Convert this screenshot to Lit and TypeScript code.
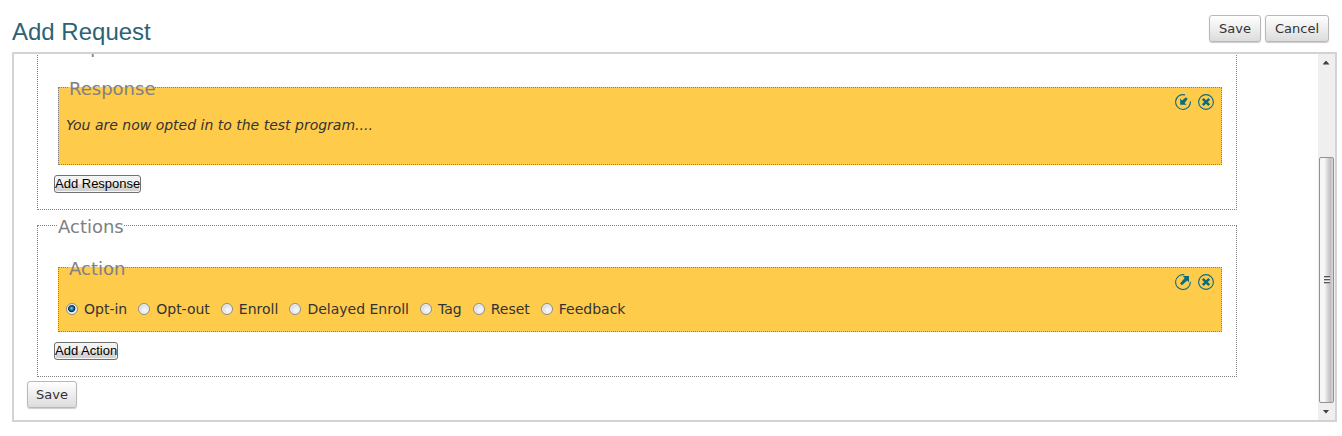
import { LitElement, html, css, svg } from "lit";
import { customElement, property, state } from "lit/decorators.js";

@customElement("round-icon")
class RoundIcon extends LitElement {
  @property() name: "collapse" | "expand" | "remove" = "remove";

  static styles = css`
    :host {
      display: block;
      width: 16px;
      height: 16px;
      color: #0b6b7d;
    }
    .glyph {
      display: block;
      width: 16px;
      height: 16px;
    }
  `;

  private shape() {
    if (this.name === "remove") {
      return svg`
        <circle cx="8" cy="8" r="7.4" fill="none" stroke="currentColor" stroke-width="1.1"/>
        <path d="M4.8 4.8L11.2 11.2M11.2 4.8L4.8 11.2" stroke="currentColor" stroke-width="2.5" fill="none"/>`;
    }
    if (this.name === "collapse") {
      return svg`
        <path d="M10 0.9A7.4 7.4 0 1 0 15.4 7.4" fill="none" stroke="currentColor" stroke-width="1.1"/>
        <path d="M5.2 4.4V10.8H11.6L9.6 8.9L12.7 5L10.9 3.2L7.1 6.4Z" fill="currentColor"/>`;
    }
    return svg`
      <path d="M9.4 0.8A7.4 7.4 0 1 0 15.4 7.8" fill="none" stroke="currentColor" stroke-width="1.1"/>
      <path d="M7.8 2H14V8.2L12.2 6.4L6.9 11.2L5.1 9.4L9.7 3.9Z" fill="currentColor"/>`;
  }

  render() {
    return html`<svg class="glyph" viewBox="0 0 16 16" aria-hidden="true">${this.shape()}</svg>`;
  }
}

@customElement("app-root")
class AppRoot extends LitElement {
  @state() private selected = "Opt-in";

  private actions = ["Opt-in", "Opt-out", "Enroll", "Delayed Enroll", "Tag", "Reset", "Feedback"];

  static styles = css`
    :host {
      display: flex;
      flex-direction: column;
      box-sizing: border-box;
      height: 100vh;
      padding: 12px 5px 14px 12px;
      background: #fff;
      color: #333;
      font: 14px/20px Verdana, "DejaVu Sans", sans-serif;
    }
    * {
      box-sizing: border-box;
    }
    .top {
      display: flex;
      align-items: center;
      justify-content: space-between;
      height: 40px;
      padding-right: 8px;
    }
    .title {
      margin: 0;
      color: #2b6376;
      font: 24px/40px "Liberation Sans", Arial, sans-serif;
    }
    .buttons {
      display: flex;
      gap: 4px;
      padding-bottom: 7px;
    }
    .btn {
      height: 27px;
      padding: 0 8px;
      border: 1px solid #b8b8b8;
      border-radius: 3px;
      background: linear-gradient(#fff, #dcdcdc);
      box-shadow: 0 1px 1px #ccc;
      color: #333;
      font: 13px/20px Verdana, "DejaVu Sans", sans-serif;
    }
    .top .btn {
      padding: 0 9px;
    }
    .panel {
      display: flex;
      flex: 1;
      min-height: 0;
      border: 2px solid #d3d3d3;
    }
    .scroller {
      flex: 1;
      overflow-y: auto;
      scrollbar-width: none;
      padding: 80px 0 12px 13px;
    }
    .group {
      min-width: 0;
      margin: 0 81px 8px 10px;
      padding: 28px 14px 16px 16px;
      border: 1px dotted #808080;
    }
    .group:last-of-type {
      margin-bottom: 4px;
    }
    legend {
      padding: 4px 0 0;
      color: #808080;
      font-size: 18px;
      line-height: 10px;
    }
    .group > .legend {
      margin-left: 4px;
    }
    .card {
      min-width: 0;
      margin: 0 0 10px 4px;
      padding: 0 7px;
      border: 1px dotted #808080;
      background: #ffcb4b;
    }
    .card > .legend {
      margin-left: 3px;
    }
    .row {
      display: flex;
      justify-content: space-between;
    }
    .message {
      margin: 0;
      padding: 21px 0 29px;
      font-style: italic;
    }
    .tools {
      display: flex;
      gap: 7px;
    }
    .tool {
      width: 16px;
      height: 16px;
      padding: 0;
      border: 0;
      background: none;
    }
    .options {
      display: flex;
      flex-wrap: wrap;
      gap: 11px;
      padding: 25px 0 12px;
    }
    .option {
      display: flex;
      align-items: center;
      gap: 6px;
    }
    .radio {
      appearance: none;
      width: 12px;
      height: 12px;
      margin: 0;
      border: 1px solid #8e8f8f;
      border-radius: 50%;
      background: radial-gradient(circle at 60% 60%, #f4f4f4 20%, #bfc4c8 100%);
      box-shadow: inset 0 0 0 1px #f4f4f4;
    }
    .radio:checked {
      background: radial-gradient(circle at 46% 44%, #7fd8f5 0, #1a6f9e 24%, #0b2c4a 42%, #e8e8e8 54%);
    }
    .add {
      display: block;
      height: 18px;
      padding: 0;
      border: 1px solid #707070;
      border-radius: 3px;
      background: linear-gradient(#f2f2f2 0 50%, #dddddd 50%, #cfcfcf);
      box-shadow: inset 0 0 0 1px #f6f6f6;
      color: #000;
      font: 13px/16px "Liberation Sans", Arial, sans-serif;
    }
    .bar {
      display: grid;
      grid-template-rows: 17px 1fr 17px;
      width: 17px;
      padding-right: 1px;
      background: #efefef;
    }
    .arrow {
      place-self: center;
      width: 7px;
      height: 4px;
      background: #404040;
    }
    .up {
      clip-path: polygon(50% 0, 100% 100%, 0 100%);
    }
    .down {
      clip-path: polygon(0 0, 100% 0, 50% 100%);
    }
    .thumb {
      display: grid;
      place-items: center;
      align-self: end;
      height: 74%;
      margin-left: 1px;
      border: 1px solid #939393;
      border-radius: 2px;
      background: linear-gradient(90deg, #f6f6f6 0 35%, #dadadc 55%, #c0c0c4 80%, #d8d8d8);
    }
    .grip {
      width: 6px;
      height: 8px;
      background: repeating-linear-gradient(#555 0 1px, #bbb 1px 2px, #f4f4f4 2px 3px);
    }
  `;

  firstUpdated() {
    const scroller = this.renderRoot.querySelector(".scroller")!;
    scroller.scrollTop = scroller.scrollHeight;
  }

  private tools(toggle: "collapse" | "expand", subject: string) {
    return html`
      <div class="tools">
        <button class="tool" type="button" aria-label="${toggle} ${subject}"><round-icon name=${toggle}></round-icon></button>
        <button class="tool" type="button" aria-label="remove ${subject}"><round-icon name="remove"></round-icon></button>
      </div>`;
  }

  render() {
    return html`
      <header class="top">
        <h1 class="title">Add Request</h1>
        <div class="buttons">
          <button class="btn" type="button">Save</button>
          <button class="btn" type="button">Cancel</button>
        </div>
      </header>
      <main class="panel">
        <form class="scroller">
          <fieldset class="group">
            <legend class="legend">Responses</legend>
            <fieldset class="card">
              <legend class="legend">Response</legend>
              <div class="row">
                <p class="message">You are now opted in to the test program....</p>
                ${this.tools("collapse", "response")}
              </div>
            </fieldset>
            <button class="add" type="button">Add Response</button>
          </fieldset>
          <fieldset class="group">
            <legend class="legend">Actions</legend>
            <fieldset class="card">
              <legend class="legend">Action</legend>
              <div class="row">
                <div class="options">
                  ${this.actions.map(
                    (name) => html`
                      <label class="option">
                        <input class="radio" type="radio" name="action" .checked=${this.selected === name}
                          @change=${() => (this.selected = name)} />
                        ${name}
                      </label>`
                  )}
                </div>
                ${this.tools("expand", "action")}
              </div>
            </fieldset>
            <button class="add" type="button">Add Action</button>
          </fieldset>
          <button class="btn" type="button">Save</button>
        </form>
        <div class="bar" aria-hidden="true">
          <span class="arrow up"></span>
          <span class="thumb"><span class="grip"></span></span>
          <span class="arrow down"></span>
        </div>
      </main>
    `;
  }
}
